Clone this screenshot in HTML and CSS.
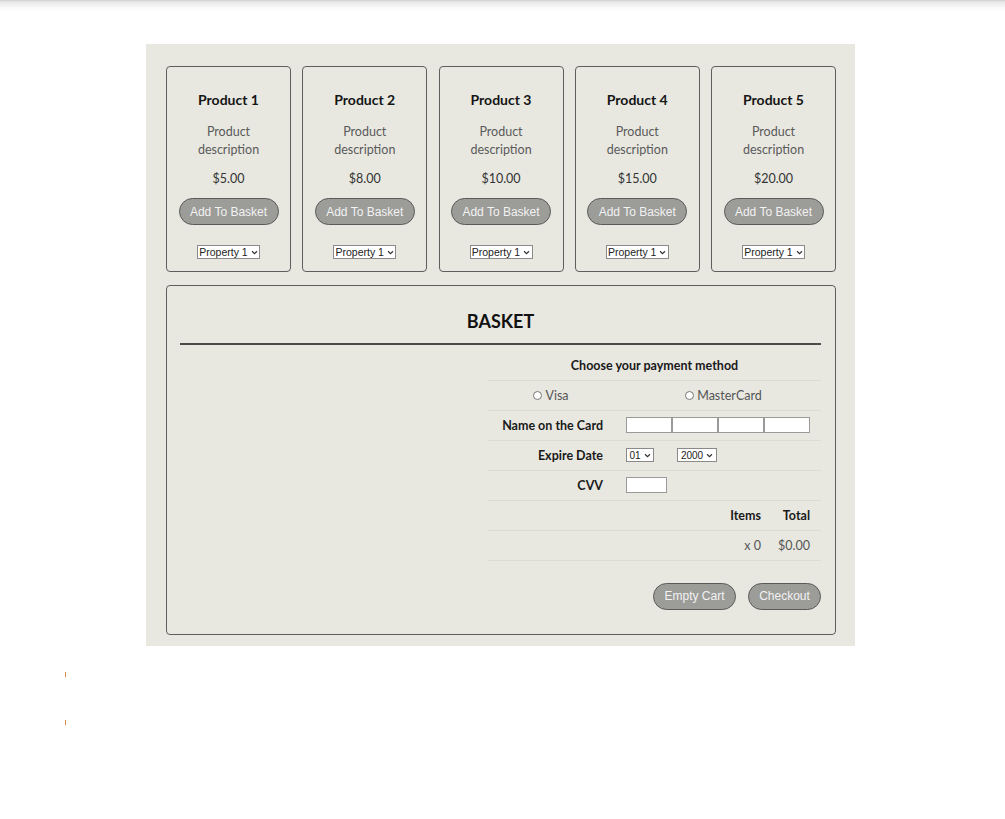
FILE: index.html
```html
<!DOCTYPE html>
<html>
<head>
<meta charset="utf-8">
<link rel="stylesheet" href="styles.css">
</head>
<body>
<div class="topshade"></div>
<div class="shop">
  <div class="products">
    <div class="card">
      <h3 class="title">Product 1</h3>
      <p class="desc">Product<br>description</p>
      <p class="price">$5.00</p>
      <button class="btn add">Add To Basket</button>
      <span class="prop">Property 1 <svg viewBox="0 0 8 6" class="chev"><path d="M1 1.5 L4 4.5 L7 1.5" /></svg></span>
    </div>
    <div class="card">
      <h3 class="title">Product 2</h3>
      <p class="desc">Product<br>description</p>
      <p class="price">$8.00</p>
      <button class="btn add">Add To Basket</button>
      <span class="prop">Property 1 <svg viewBox="0 0 8 6" class="chev"><path d="M1 1.5 L4 4.5 L7 1.5" /></svg></span>
    </div>
    <div class="card">
      <h3 class="title">Product 3</h3>
      <p class="desc">Product<br>description</p>
      <p class="price">$10.00</p>
      <button class="btn add">Add To Basket</button>
      <span class="prop">Property 1 <svg viewBox="0 0 8 6" class="chev"><path d="M1 1.5 L4 4.5 L7 1.5" /></svg></span>
    </div>
    <div class="card">
      <h3 class="title">Product 4</h3>
      <p class="desc">Product<br>description</p>
      <p class="price">$15.00</p>
      <button class="btn add">Add To Basket</button>
      <span class="prop">Property 1 <svg viewBox="0 0 8 6" class="chev"><path d="M1 1.5 L4 4.5 L7 1.5" /></svg></span>
    </div>
    <div class="card">
      <h3 class="title">Product 5</h3>
      <p class="desc">Product<br>description</p>
      <p class="price">$20.00</p>
      <button class="btn add">Add To Basket</button>
      <span class="prop">Property 1 <svg viewBox="0 0 8 6" class="chev"><path d="M1 1.5 L4 4.5 L7 1.5" /></svg></span>
    </div>
  </div>

  <div class="basket">
    <h2 class="btitle">BASKET</h2>
    <div class="rule"></div>
    <div class="paytable">
      <div class="row head">Choose your payment method</div>
      <div class="row">
        <div class="c1 center"><span class="radio"></span>Visa</div>
        <div class="c2 center"><span class="radio"></span>MasterCard</div>
      </div>
      <div class="row">
        <div class="c1 label">Name on the Card</div>
        <div class="c2"><span class="inp w46"></span><span class="inp w46"></span><span class="inp w46"></span><span class="inp w46"></span></div>
      </div>
      <div class="row">
        <div class="c1 label">Expire Date</div>
        <div class="c2">
          <span class="sel s28">01 <svg viewBox="0 0 8 6" class="chev"><path d="M1 1.5 L4 4.5 L7 1.5" /></svg></span>
          <span class="sel s40">2000 <svg viewBox="0 0 8 6" class="chev"><path d="M1 1.5 L4 4.5 L7 1.5" /></svg></span>
        </div>
      </div>
      <div class="row">
        <div class="c1 label">CVV</div>
        <div class="c2"><span class="inp w41"></span></div>
      </div>
      <div class="row totals">
        <span class="tcol bold">Items</span><span class="tcol2 bold">Total</span>
      </div>
      <div class="row totals">
        <span class="tcol light">x 0</span><span class="tcol2 light">$0.00</span>
      </div>
    </div>
    <div class="actions">
      <button class="btn empty">Empty Cart</button>
      <button class="btn checkout">Checkout</button>
    </div>
  </div>
</div>
<div class="tick t1"></div>
<div class="tick t2"></div>
</body>
</html>
```

FILE: styles.css
```css
* { box-sizing: border-box; }
html, body { margin: 0; padding: 0; background: #ffffff; }
body { font-family: "Lato", "Noto Sans", sans-serif; color: #111; }

.topshade {
  height: 12px;
  background: linear-gradient(#cfcfcf 0px, #e8e8e8 2px, #fafafa 8px, #ffffff 12px);
}

.shop {
  width: 709px;
  margin: 32px 0 0 146px;
  background: #e8e8e1;
  padding: 22px 19px 11px 20px;
}

.products {
  display: flex;
  gap: 11.25px;
}

.card {
  width: 125px;
  height: 206px;
  border: 1px solid #5e5e5e;
  border-radius: 4px;
  display: flex;
  flex-direction: column;
  align-items: center;
  padding-top: 23px;
}

.title {
  margin: 0;
  font-size: 14px;
  font-weight: 700;
  line-height: 20px;
  color: #151515;
}

.desc {
  margin: 13px 0 0;
  font-size: 12.5px;
  line-height: 18px;
  color: #5a5a5a;
  text-align: center;
}

.price {
  margin: 11px 0 0;
  font-size: 12.5px;
  line-height: 18px;
  color: #333;
}

.btn {
  font-family: "Liberation Sans", Arial, sans-serif;
  font-size: 12px;
  color: #f2f2f2;
  background: #9c9c99;
  border: 1px solid #5a5a5a;
  border-radius: 14px;
  height: 27px;
  padding: 0;
}

.add {
  width: 100px;
  margin-top: 10px;
}

.prop {
  margin-top: 20px;
  height: 14px;
  width: 63px;
  background: #fff;
  border: 1px solid #8a8a8a;
  font-family: "Liberation Sans", Arial, sans-serif;
  font-size: 10.5px;
  line-height: 12px;
  color: #222;
  display: flex;
  align-items: center;
  justify-content: center;
  gap: 3px;
}

.chev {
  width: 7px;
  height: 5px;
  fill: none;
  stroke: #333;
  stroke-width: 1.4;
}

.basket {
  margin-top: 13px;
  border: 1px solid #5e5e5e;
  border-radius: 4px;
  height: 350px;
  padding: 22px 14px 0 13px;
  display: flex;
  flex-direction: column;
}

.btitle {
  margin: 0;
  font-size: 18px;
  line-height: 26px;
  font-weight: 700;
  text-align: center;
  color: #111;
}

.rule {
  margin-top: 9px;
  height: 1.5px;
  background: #4a4a4a;
}

.paytable {
  margin: 7px 0 0 308px;
  width: 333px;
  font-size: 12.5px;
}

.row {
  display: flex;
  align-items: center;
  height: 30px;
  border-bottom: 1px solid #dcdcd4;
}

.row.head {
  justify-content: center;
  font-weight: 700;
  color: #1a1a1a;
  height: 29px;
}

.c1 { width: 126px; }
.c2 { width: 207px; display: flex; align-items: center; }

.center {
  display: flex;
  align-items: center;
  justify-content: center;
  color: #555;
}

.radio {
  width: 9px;
  height: 9px;
  border: 1px solid #777;
  border-radius: 50%;
  background: #fff;
  margin-right: 3px;
}

.label {
  text-align: right;
  padding-right: 11px;
  font-weight: 700;
  color: #1a1a1a;
}

.c2 .inp, .c2 .sel { flex: none; }
.c2 { padding-left: 12px; }

.inp {
  height: 16px;
  background: #fff;
  border: 1px solid #9a9a9a;
}

.w46 { width: 46px; }
.w41 { width: 41px; }

.sel {
  height: 14px;
  background: #fff;
  border: 1px solid #8a8a8a;
  font-family: "Liberation Sans", Arial, sans-serif;
  font-size: 10px;
  color: #222;
  display: flex;
  align-items: center;
  justify-content: center;
  gap: 3px;
}

.s28 { width: 28px; }
.s40 { width: 40px; margin-left: 23px; }

.totals {
  justify-content: flex-end;
}

.tcol { width: 60px; text-align: right; padding-right: 10px; }
.tcol2 { width: 50px; text-align: right; padding-right: 11px; }
.bold { font-weight: 700; color: #1a1a1a; }
.light { color: #555; }

.actions {
  margin-top: 22px;
  display: flex;
  justify-content: flex-end;
  gap: 12px;
}

.empty { width: 83px; }
.checkout { width: 73px; }

.tick {
  width: 1px;
  height: 5px;
  margin-left: 65px;
  background: #d08a4a;
}

.t1 { margin-top: 26px; }
.t2 { margin-top: 43px; }
```
